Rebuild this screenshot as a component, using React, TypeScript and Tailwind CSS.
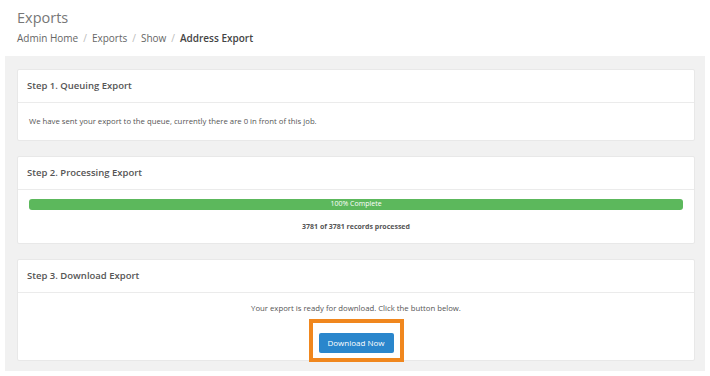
// Export progress page: queue, processing and download steps

const font = { fontFamily: '"Open Sans", "Liberation Sans", sans-serif' }

function Card({ title, children }: { title: string; children: React.ReactNode }) {
  return (
    <div className="bg-white border border-[#e8e8e8] rounded-[2px]">
      <div className="h-[33px] flex items-center px-[9px] border-b border-[#ebebeb]">
        <h2 className="text-[9.5px] font-semibold text-[#555]">{title}</h2>
      </div>
      {children}
    </div>
  )
}

export default function App() {
  return (
    <div className="w-[710px] h-[376px] bg-white overflow-hidden" style={font}>
      {/* Page header */}
      <div className="px-[17px] pt-[8px] h-[56px]">
        <h1 className="text-[14.5px] leading-[20px] font-normal text-[#777]">Exports</h1>
        <nav className="mt-[3px] text-[10px] leading-[14px] text-[#666] flex items-center gap-[5px]">
          <span>Admin Home</span>
          <span className="text-[#bbb]">/</span>
          <span>Exports</span>
          <span className="text-[#bbb]">/</span>
          <span>Show</span>
          <span className="text-[#bbb]">/</span>
          <span className="font-semibold text-[#444]">Address Export</span>
        </nav>
      </div>

      {/* Steps */}
      <div className="mx-[5px] bg-[#f1f1f1] pl-[12px] pr-[10px] pt-[13px] pb-[10px] flex flex-col gap-[15px]">
        <Card title="Step 1. Queuing Export">
          <div className="h-[37px] flex items-center px-[11px] text-[7.75px] text-[#555]">
            We have sent your export to the queue, currently there are 0 in front of this job.
          </div>
        </Card>

        <Card title="Step 2. Processing Export">
          <div className="h-[53px] px-[11px] pt-[9px]">
            <div className="h-[11px] rounded-[3px] bg-[#5cb85c] flex items-center justify-center text-[7px] text-white">
              100% Complete
            </div>
            <p className="mt-[12px] text-center text-[7px] font-bold text-[#555]">
              3781 of 3781 records processed
            </p>
          </div>
        </Card>

        <Card title="Step 3. Download Export">
          <div className="h-[67px] flex flex-col items-center pt-[10px]">
            <p className="text-[7.75px] leading-[10px] text-[#555]">
              Your export is ready for download. Click the button below.
            </p>
            <div className="mt-[6px] border-[4px] border-[#f0871e] px-[6px] py-[5px]">
              <button className="h-[20px] w-[75px] rounded-[2px] bg-[#2a86cc] text-white text-[8px]">
                Download Now
              </button>
            </div>
          </div>
        </Card>
      </div>
    </div>
  )
}
